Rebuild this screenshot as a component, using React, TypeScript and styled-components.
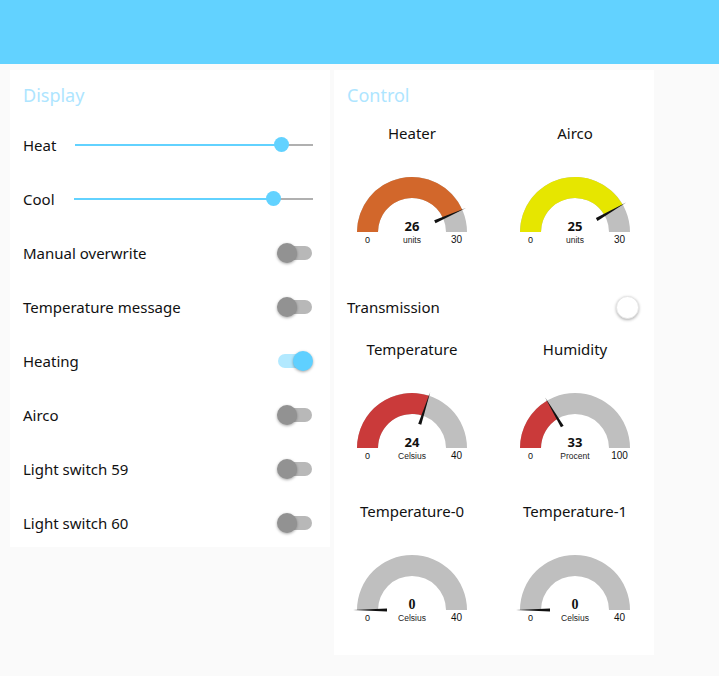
import React from "react";
import styled, { createGlobalStyle } from "styled-components";

const Global = createGlobalStyle`
  html, body { margin: 0; padding: 0; background: #fafafa; }
  body { font-family: "Noto Sans", "Open Sans", sans-serif; color: #111; }
`;

const Page = styled.div`
  min-height: 676px;
  background: #fafafa;
`;

const Header = styled.header`
  height: 64px;
  background: #62d2ff;
`;

const Content = styled.main`
  display: flex;
  align-items: flex-start;
  gap: 4px;
  padding: 6px 10px;
`;

const Card = styled.section`
  width: 320px;
  background: #fff;
  display: flex;
  flex-direction: column;
`;

const CardTitle = styled.h2`
  margin: 0 0 15px;
  padding: 14px 13px 0;
  font-size: 18px;
  line-height: 22px;
  font-weight: 400;
  color: #aee5ff;
`;

const Rows = styled.div`
  display: flex;
  flex-direction: column;
  gap: 6px;
`;

const Row = styled.div`
  height: 48px;
  display: flex;
  align-items: center;
  padding: 0 18px 0 13px;
  font-size: 15px;
`;

const Label = styled.span<{ $w?: number }>`
  flex: ${(p) => (p.$w ? `0 0 ${p.$w}px` : "1 1 auto")};
  white-space: nowrap;
`;

const SliderTrack = styled.div`
  position: relative;
  flex: 1;
  height: 2px;
  margin-right: -1px;
  background: #b0b0b0;
`;

const SliderFill = styled.div`
  position: absolute;
  left: 0;
  top: 0;
  height: 2px;
  background: #62d2ff;
`;

const SliderThumb = styled.div`
  position: absolute;
  top: -7px;
  width: 15px;
  height: 15px;
  margin-left: -7.5px;
  border-radius: 50%;
  background: #62d2ff;
`;

const Switch = styled.div<{ $on?: boolean }>`
  position: relative;
  width: 34px;
  height: 14px;
  border-radius: 7px;
  background: ${(p) => (p.$on ? "#b2e9ff" : "#b8b8b8")};
`;

const SwitchThumb = styled.div<{ $on?: boolean }>`
  position: absolute;
  top: -3px;
  left: ${(p) => (p.$on ? "15px" : "-1px")};
  width: 20px;
  height: 20px;
  border-radius: 50%;
  background: ${(p) => (p.$on ? "#5fd0ff" : "#929292")};
  box-shadow: 0 1px 3px rgba(0, 0, 0, 0.35);
`;

const Round = styled.div`
  width: 21px;
  height: 21px;
  border-radius: 50%;
  background: #fff;
  border: 1px solid #e6e6e6;
  box-shadow: 0 1px 3px rgba(0, 0, 0, 0.3);
`;

const Grid = styled.div`
  display: grid;
  grid-template-columns: 156px 156px;
  column-gap: 7px;
  row-gap: 6px;
`;

const Wide = styled(Row)`
  grid-column: 1 / -1;
  padding-right: 14px;
`;

const GaugeBox = styled.div`
  height: 156px;
  display: flex;
  flex-direction: column;
  align-items: center;
`;

const GaugeTitle = styled.div`
  height: 24px;
  line-height: 24px;
  font-size: 15px;
  color: #111;
  white-space: nowrap;
`;

const GaugeSvg = styled.svg`
  display: block;
`;

function Slider({ frac }: { frac: number }) {
  return (
    <SliderTrack>
      <SliderFill style={{ width: `${frac * 100}%` }} />
      <SliderThumb style={{ left: `${frac * 100}%` }} />
    </SliderTrack>
  );
}

function Toggle({ on }: { on?: boolean }) {
  return (
    <Switch $on={on}>
      <SwitchThumb $on={on} />
    </Switch>
  );
}

const CX = 78;
const CY = 87;
const RO = 55;
const RI = 34;

function pt(r: number, a: number) {
  return [CX - r * Math.cos(a), CY - r * Math.sin(a)];
}

function sector(a0: number, a1: number) {
  const [x0, y0] = pt(RO, a0);
  const [x1, y1] = pt(RO, a1);
  const [x2, y2] = pt(RI, a1);
  const [x3, y3] = pt(RI, a0);
  return `M${x0} ${y0} A${RO} ${RO} 0 0 1 ${x1} ${y1} L${x2} ${y2} A${RI} ${RI} 0 0 0 ${x3} ${y3} Z`;
}

type GaugeProps = {
  title: string;
  value: number;
  min: number;
  max: number;
  units: string;
  color: string;
  serif?: boolean;
};

function Gauge({ title, value, min, max, units, color, serif }: GaugeProps) {
  const a = (Math.PI * (value - min)) / (max - min);
  const [bx, by] = pt(25, a);
  const [tx, ty] = pt(59, a);
  const px = Math.sin(a);
  const py = -Math.cos(a);
  const w = 1.6;
  const needle = `${bx + px * w},${by + py * w} ${tx},${ty} ${bx - px * w},${by - py * w}`;
  return (
    <GaugeBox>
      <GaugeTitle>{title}</GaugeTitle>
      <GaugeSvg width={156} height={132} viewBox="0 0 156 132">
        <path d={sector(0, Math.PI)} fill="#bfbfbf" />
        {a > 0 && <path d={sector(0, a)} fill={color} />}
        <polygon points={needle} fill="#111" />
        <text
          x={CX}
          y={86}
          textAnchor="middle"
          fontSize={serif ? 14 : 13}
          fontWeight={700}
          fontFamily={serif ? "'Liberation Serif', serif" : "'Noto Sans', sans-serif"}
          fill="#111"
        >
          {value}
        </text>
        <text x={CX} y={97.5} textAnchor="middle" fontSize={8.5} fontFamily="'Liberation Sans', sans-serif" fill="#222">
          {units}
        </text>
        <text x={CX - 44.5} y={98} textAnchor="middle" fontSize={9} fontFamily="'Liberation Sans', sans-serif" fill="#111">
          {min}
        </text>
        <text x={CX + 44.5} y={98} textAnchor="middle" fontSize={10} fontFamily="'Liberation Sans', sans-serif" fill="#111">
          {max}
        </text>
      </GaugeSvg>
    </GaugeBox>
  );
}

const toggles: { label: string; on?: boolean }[] = [
  { label: "Manual overwrite" },
  { label: "Temperature message" },
  { label: "Heating", on: true },
  { label: "Airco" },
  { label: "Light switch 59" },
  { label: "Light switch 60" },
];

export default function App() {
  return (
    <Page>
      <Global />
      <Header />
      <Content>
        <Card>
          <CardTitle>Display</CardTitle>
          <Rows>
            <Row>
              <Label $w={52}>Heat</Label>
              <Slider frac={0.866} />
            </Row>
            <Row>
              <Label $w={51}>Cool</Label>
              <Slider frac={0.833} />
            </Row>
            {toggles.map((t) => (
              <Row key={t.label}>
                <Label>{t.label}</Label>
                <Toggle on={t.on} />
              </Row>
            ))}
          </Rows>
        </Card>
        <Card>
          <CardTitle>Control</CardTitle>
          <Grid>
            <Gauge title="Heater" value={26} min={0} max={30} units="units" color="#d2672b" />
            <Gauge title="Airco" value={25} min={0} max={30} units="units" color="#e6e600" />
            <Wide>
              <Label>Transmission</Label>
              <Round />
            </Wide>
            <Gauge title="Temperature" value={24} min={0} max={40} units="Celsius" color="#ca3a3a" />
            <Gauge title="Humidity" value={33} min={0} max={100} units="Procent" color="#ca3a3a" />
            <Gauge title="Temperature-0" value={0} min={0} max={40} units="Celsius" color="#ca3a3a" serif />
            <Gauge title="Temperature-1" value={0} min={0} max={40} units="Celsius" color="#ca3a3a" serif />
          </Grid>
        </Card>
      </Content>
    </Page>
  );
}
